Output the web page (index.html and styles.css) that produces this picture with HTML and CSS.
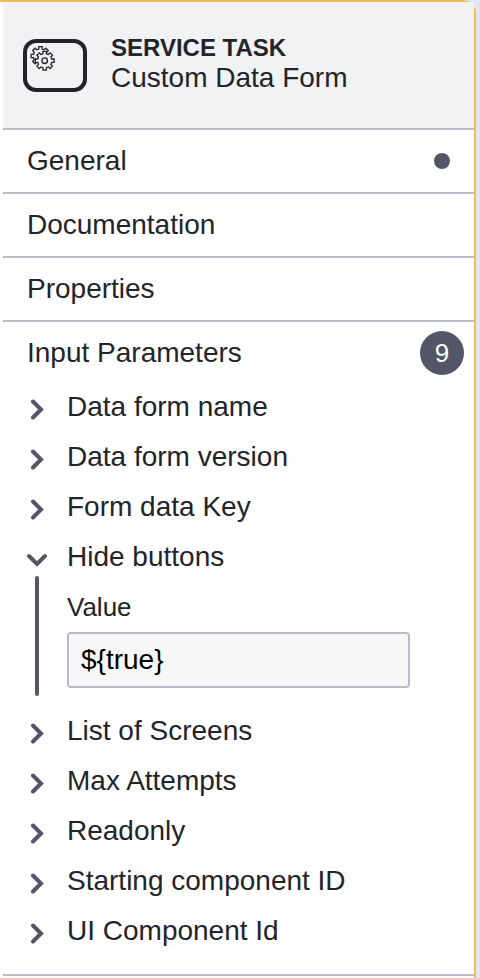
FILE: index.html
```html
<!DOCTYPE html>
<html lang="en">
<head>
    <meta charset="UTF-8">
    <meta name="viewport" content="width=device-width, initial-scale=1.0">
    <title>Service Task</title>
    <link rel="stylesheet" href="styles.css">
</head>
<body>
    <svg class="sprite" aria-hidden="true">
        <symbol id="chevron-right" viewBox="0 0 20 26">
            <path d="M6 7.500 L14 15.500 L6 23.500" fill="none" stroke="currentColor" stroke-width="4" stroke-linecap="round"/>
        </symbol>
        <symbol id="chevron-down" viewBox="0 0 20 26">
            <path d="M2 12 L10 20 L18 12" fill="none" stroke="currentColor" stroke-width="4" stroke-linecap="round"/>
        </symbol>
    </svg>

    <aside class="panel">
        <header class="header">
            <svg class="task-icon" viewBox="0 0 64 53" aria-hidden="true">
                <defs>
                    <path id="gear" d="M-1.700-7V-9.400H1.700V-7L3.700-6.200L5.400-7.800L7.800-5.400L6.200-3.700L7-1.700H9.400V1.700H7L6.200 3.700L7.800 5.400L5.400 7.800L3.700 6.200L1.700 7V9.400H-1.700V7L-3.700 6.200L-5.400 7.800L-7.800 5.400L-6.200 3.700L-7 1.700H-9.400V-1.700H-7L-6.200-3.700L-7.800-5.400L-5.400-7.800L-3.700-6.200Z"/>
                </defs>
                <rect x="2" y="2" width="60" height="49" rx="11" fill="none" stroke="#22242a" stroke-width="4"/>
                <g fill="#f1f2f4" stroke="#22242a" stroke-width="1.300">
                    <use href="#gear" x="17.500" y="17"/>
                    <circle cx="21.700" cy="21.700" r="8.500" stroke="none"/>
                    <use href="#gear" x="21.700" y="21.700"/>
                    <circle cx="21.700" cy="21.700" r="2.800"/>
                </g>
            </svg>
            <div class="title">
                <div class="type">SERVICE TASK</div>
                <div class="name">Custom Data Form</div>
            </div>
        </header>

        <section class="group">
            <button class="group-header" type="button">General <span class="dot"></span></button>
        </section>
        <section class="group">
            <button class="group-header" type="button">Documentation</button>
        </section>
        <section class="group">
            <button class="group-header" type="button">Properties</button>
        </section>
        <section class="group">
            <button class="group-header" type="button">Input Parameters <span class="badge">9</span></button>
            <ul class="list">
                <li><button class="item" type="button"><svg class="arrow"><use href="#chevron-right"/></svg>Data form name</button></li>
                <li><button class="item" type="button"><svg class="arrow"><use href="#chevron-right"/></svg>Data form version</button></li>
                <li><button class="item" type="button"><svg class="arrow"><use href="#chevron-right"/></svg>Form data Key</button></li>
                <li>
                    <button class="item" type="button" aria-expanded="true"><svg class="arrow"><use href="#chevron-down"/></svg>Hide buttons</button>
                    <div class="entry">
                        <div class="field">
                            <label for="value">Value</label>
                            <input type="text" id="value" value="${true}">
                        </div>
                    </div>
                </li>
                <li><button class="item" type="button"><svg class="arrow"><use href="#chevron-right"/></svg>List of Screens</button></li>
                <li><button class="item" type="button"><svg class="arrow"><use href="#chevron-right"/></svg>Max Attempts</button></li>
                <li><button class="item" type="button"><svg class="arrow"><use href="#chevron-right"/></svg>Readonly</button></li>
                <li><button class="item" type="button"><svg class="arrow"><use href="#chevron-right"/></svg>Starting component ID</button></li>
                <li><button class="item" type="button"><svg class="arrow"><use href="#chevron-right"/></svg>UI Component Id</button></li>
            </ul>
        </section>
    </aside>
</body>
</html>
```
FILE: styles.css
```css
* {
    box-sizing: border-box;
}
body {
    margin: 0;
    padding-right: 4px;
    background-color: #e1e6f4;
    color: #22242a;
    font-family: Helvetica, "Liberation Sans", Arial, sans-serif;
    font-size: 28px;
}
.sprite {
    display: none;
}
.panel {
    min-height: 100vh;
    padding-left: 3px;
    background-color: white;
    border-top: 2px solid #f4bc50;
    border-right: 2px solid #f4bc50;
    border-top-right-radius: 14px;
}
.header {
    display: flex;
    align-items: center;
    gap: 24px;
    height: 128px;
    padding: 0 20px;
    background-color: #f1f2f4;
    border-bottom: 2px solid #b9bbc8;
}
.task-icon {
    width: 64px;
    height: 53px;
}
.title {
    padding-bottom: 4px;
    line-height: 30px;
}
.type {
    font-size: 24px;
    font-weight: bold;
}
.group {
    border-bottom: 2px solid #b9bbc8;
}
button {
    background: none;
    border: none;
    color: inherit;
    font: inherit;
    text-align: left;
    cursor: pointer;
}
.group-header {
    display: flex;
    align-items: center;
    justify-content: space-between;
    width: 100%;
    height: 62px;
    padding: 0 10px 0 24px;
}
.dot {
    width: 16px;
    height: 16px;
    margin-right: 14px;
    background-color: #525666;
    border-radius: 50%;
}
.badge {
    width: 44px;
    height: 44px;
    background-color: #525666;
    border-radius: 50%;
    color: white;
    font-size: 26px;
    line-height: 44px;
    text-align: center;
}
.list {
    display: flex;
    flex-direction: column;
    gap: 12px;
    margin: 0;
    padding: 4px 64px 24px 24px;
    list-style: none;
}
.item {
    display: flex;
    align-items: center;
    gap: 20px;
    width: 100%;
    height: 38px;
    padding: 0;
}
.arrow {
    width: 20px;
    height: 26px;
    color: #525666;
}
.entry {
    display: flex;
    gap: 28px;
    margin: 0 0 4px 8px;
}
.entry::before {
    content: "";
    width: 4px;
    background-color: #525666;
    border-radius: 2px;
}
.field {
    display: flex;
    flex: 1;
    flex-direction: column;
    gap: 10px;
    padding: 16px 0 8px;
}
.field label {
    font-size: 26px;
    line-height: 30px;
}
.field input {
    width: 100%;
    height: 56px;
    padding: 0 12px;
    background-color: #f7f7f8;
    border: 2px solid #b9bbc8;
    border-radius: 4px;
    color: black;
    font: inherit;
}
```
